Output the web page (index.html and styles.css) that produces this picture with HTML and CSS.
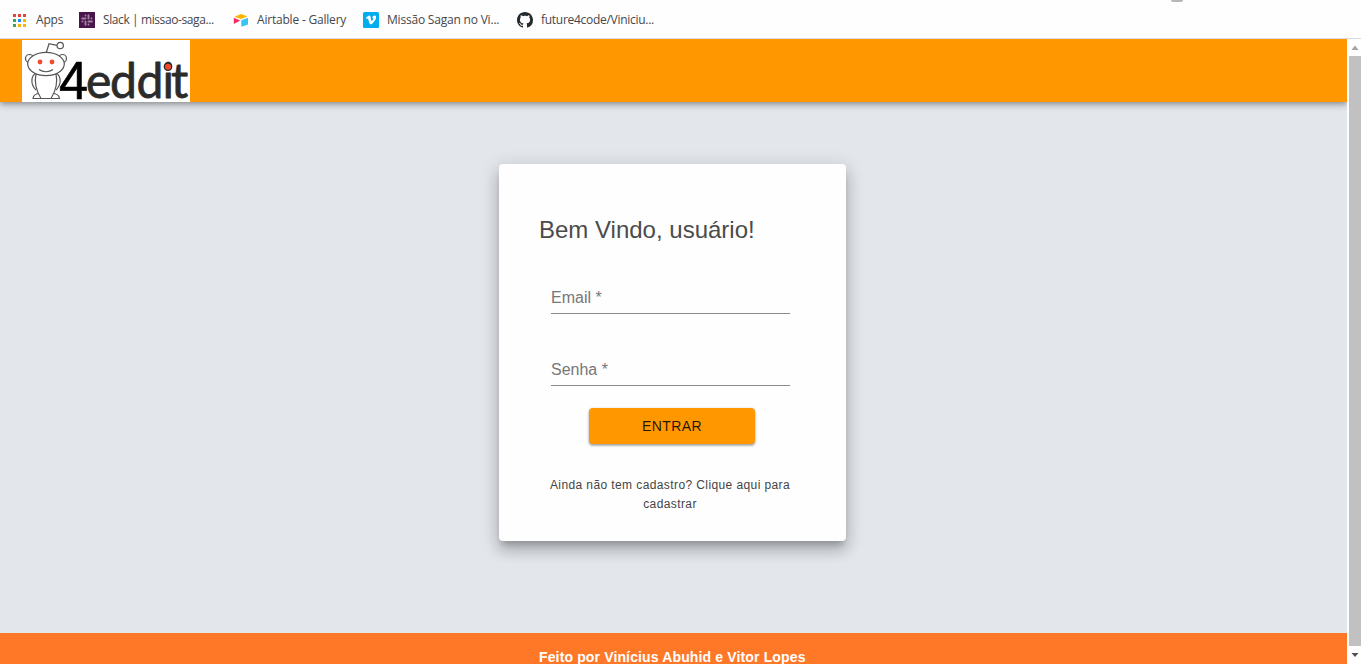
FILE: index.html
```html
<!DOCTYPE html>
<html lang="pt-BR">
<head>
<meta charset="utf-8">
<title>4eddit</title>
<link rel="stylesheet" href="styles.css">
</head>
<body>
<div class="window">
  <nav class="bookmarks">
    <span class="tab-handle"></span>
    <a class="bookmark apps">
      <svg width="13" height="13" viewBox="0 0 13 13"><g fill="#ea4335"><path d="M0 0h3v3H0zM5 0h3v3H5zM10 0h3v3h-3z"/></g><path fill="#34a853" d="M0 5h3v3H0zM0 10h3v3H0z"/><path fill="#1a8cf0" d="M5 5h3v3H5z"/><path fill="#fbb30a" d="M10 5h3v3h-3zM5 10h3v3H5zM10 10h3v3h-3z"/></svg>
      <span class="label">Apps</span>
    </a>
    <a class="bookmark slack">
      <svg width="16" height="16" viewBox="0 0 16 16"><path fill="#4a154b" d="M0 0h16v16H0z"/><g stroke="#a084a2" stroke-width="1.900" stroke-linecap="round"><path d="M9.500 3.200v3.300M3.200 6.500h3.300M6.500 9.500v3.300M9.500 9.500h3.300M6.500 3.500v.1M12.500 6.500v.1M9.500 12.500v.1M3.500 9.500v.1"/></g></svg>
      <span class="label">Slack | missao-saga...</span>
    </a>
    <a class="bookmark airtable">
      <svg width="16" height="16" viewBox="0 0 16 16"><path fill="#fcb400" d="M1.500 4.700 7.300 2.200q.8-.3 1.600 0l5.600 2.300-5.700 2.300q-.8.3-1.600 0z"/><path fill="#38c4f5" d="M8.300 8.200 15 5.800v6.600l-6.700 2.300z"/><path fill="#f82b60" d="M.8 5.700 7.200 8.500.8 12z"/></svg>
      <span class="label">Airtable - Gallery</span>
    </a>
    <a class="bookmark vimeo">
      <svg width="16" height="16" viewBox="0 0 16 16"><rect width="16" height="16" rx="1.500" fill="#00adef"/><path fill="#fff" d="M3 5.800C4.200 4.700 5.400 3.600 6.200 3.600c1 0 1.300.9 1.500 2.100.3 1.600.5 3.400 1 3.400.4 0 1.500-1.700 1.500-2.500 0-.8-.6-.9-1.200-.6.5-1.700 1.500-2.600 2.700-2.500 1 .1 1.500.8 1.400 1.900-.2 2.300-3.600 6.900-5.400 6.900-1.200 0-1.500-1.400-1.900-3-.4-1.300-.6-2.700-1-2.700-.3 0-.8.3-1.200.6z"/></svg>
      <span class="label">Missão Sagan no Vi...</span>
    </a>
    <a class="bookmark github">
      <svg width="16" height="16" viewBox="0 0 16 16"><path fill="#24292e" d="M8 0C3.580 0 0 3.580 0 8c0 3.540 2.290 6.530 5.470 7.590.4.070.550-.170.550-.380 0-.190-.010-.820-.010-1.490-2.010.370-2.530-.490-2.690-.940-.090-.230-.480-.940-.820-1.130-.280-.150-.680-.520-.010-.530.630-.010 1.080.580 1.230.820.720 1.210 1.870.870 2.330.660.070-.520.280-.870.510-1.070-1.780-.200-3.640-.890-3.640-3.950 0-.870.310-1.590.820-2.150-.080-.200-.360-1.020.080-2.120 0 0 .670-.210 2.200.820.640-.180 1.320-.270 2-.270s1.360.090 2 .270c1.530-1.040 2.200-.820 2.200-.820.440 1.100.160 1.920.080 2.120.510.560.820 1.270.820 2.150 0 3.070-1.870 3.750-3.650 3.950.290.250.540.730.540 1.480 0 1.070-.010 1.930-.010 2.200 0 .210.150.460.550.380A8.010 8.010 0 0 0 16 8c0-4.420-3.580-8-8-8z"/></svg>
      <span class="label">future4code/Viniciu...</span>
    </a>
  </nav>
  <div class="viewport">
    <div class="page">
      <header class="header">
        <svg class="logo" width="168" height="62" viewBox="0 0 168 62">
          <path fill="#fff" d="M0 0h168v62H0z"/>
          <g fill="#fff" stroke="#555" stroke-width="1.200">
            <path fill="none" d="M24.300 12.500 27 3.700l8 1.600"/>
            <circle cx="38.200" cy="5.500" r="3.200"/>
            <circle cx="7.500" cy="18.500" r="4"/>
            <circle cx="40.500" cy="18.500" r="4"/>
            <path d="M14 33c-5 3-6 11 0 17M34 33c5 3 6 11 0 17"/>
            <path d="M11 58.500c.5-4 3-5 7-5h12c4 0 7 1 7.500 5z"/>
            <path d="M14 34h20c2 9-1 18-5 24.500H19C15 52 12 43 14 34z"/>
            <ellipse cx="24" cy="24" rx="18.300" ry="11.700"/>
            <path fill="none" d="M17 29.500c4 3 10 3 14 0"/>
          </g>
          <circle cx="18" cy="22" r="2.400" fill="#f04b2b"/><circle cx="30" cy="22" r="2.400" fill="#f04b2b"/>
          <text class="logo-four" x="37" y="58.500" textLength="29" lengthAdjust="spacingAndGlyphs">4</text>
          <text class="logo-word" x="64 88 114.500 140.500 149" y="58">eddit</text>
          <circle cx="146" cy="26.700" r="3.700" fill="#f04b2b" stroke="#2b2b2b" stroke-width="1.300"/>
        </svg>
      </header>
      <main class="main">
        <form class="card">
          <h1 class="title">Bem Vindo, usuário!</h1>
          <div class="field">Email *</div>
          <div class="field">Senha *</div>
          <button class="submit" type="button">ENTRAR</button>
          <p class="signup">Ainda não tem cadastro? Clique aqui para cadastrar</p>
        </form>
      </main>
      <footer class="footer">Feito por Vinícius Abuhid e Vitor Lopes</footer>
    </div>
    <div class="scrollbar">
      <svg class="arrow" width="12" height="17" viewBox="0 0 12 17"><path fill="#a3a3a3" d="M2.500 11 6 6.500 9.500 11z"/></svg>
      <div class="thumb"></div>
      <svg class="arrow" width="12" height="18" viewBox="0 0 12 18"><path fill="#505050" d="M2.500 7h7L6 11z"/></svg>
    </div>
  </div>
</div>
</body>
</html>
```
FILE: styles.css
```css
* { box-sizing: border-box; }
body { margin: 0; overflow: hidden; background: #fff; font-family: "Liberation Sans", Arial, sans-serif; }
.window { height: 664px; display: flex; flex-direction: column; }
.bookmarks { position: relative; flex: none; height: 39px; display: flex; align-items: center; border-bottom: 1px solid #d9dae2; padding: 2px 0 0 13px; background: #fefefe; }
.tab-handle { position: absolute; left: 1171px; top: 0; width: 12px; height: 2px; background: #b4b6ba; border-radius: 0 0 3px 3px; }
.bookmark { display: flex; align-items: center; gap: 8px; height: 16px; flex: none; }
.bookmark svg { flex: none; display: block; }
.label { font: 12px/16px "Open Sans", "Noto Sans", sans-serif; color: #45474b; white-space: nowrap; letter-spacing: -.2px; }
.apps { width: 66px; gap: 10px; }
.slack { width: 154px; }
.airtable { width: 130px; }
.vimeo { width: 154px; }
.slack .label { letter-spacing: -.4px; }
.github .label { letter-spacing: -.28px; }
.viewport { flex: 1; min-height: 0; display: flex; }
.page { width: 1347px; overflow: hidden; display: flex; flex-direction: column; background: #e3e6eb; }
.header { position: relative; height: 63px; flex: none; padding: 1px 0 0 22px; background: #ff9800; box-shadow: 0 2px 4px -1px rgba(0,0,0,.2), 0 4px 5px rgba(0,0,0,.14), 0 1px 10px rgba(0,0,0,.12); }
.logo { display: block; overflow: visible; }
.logo-four { font: 53px "Liberation Sans", sans-serif; fill: #000; stroke: #000; stroke-width: .6px; stroke-linejoin: round; }
.logo-word { font: 48px Lato, sans-serif; fill: #2b2b2b; stroke: #2b2b2b; stroke-width: .8px; stroke-linejoin: round; }
.main { height: 531px; flex: none; padding: 62px 0 0 499px; }
.card { width: 347px; height: 377px; padding: 51px 56px 0 40px; background: #fefefe; border-radius: 4px; display: flex; flex-direction: column; box-shadow: 0 6px 6px -3px rgba(0,0,0,.2), 0 10px 14px 1px rgba(0,0,0,.14), 0 4px 18px 3px rgba(0,0,0,.12); }
.title { margin: 0 0 38px; font-size: 24px; font-weight: 400; line-height: 30px; color: #4b4b4b; white-space: nowrap; }
.field { height: 31px; width: 239px; margin: 0 0 41px 12px; padding-top: 5px; flex: none; border-bottom: 1px solid #8b8b8b; font-size: 16px; line-height: 20px; color: #777; }
.submit { width: 166px; height: 36px; margin: -19px 0 31px 50px; flex: none; padding: 0; border: 0; border-radius: 4px; background: #ff9800; color: rgba(0,0,0,.87); font: 14px/36px "Liberation Sans", sans-serif; letter-spacing: .4px; box-shadow: 0 1px 3px rgba(0,0,0,.3), 0 2px 2px rgba(0,0,0,.16); }
.signup { margin: 1px 0 0 9px; width: 244px; font-size: 12px; line-height: 19px; letter-spacing: .4px; text-align: center; color: #454545; }
.footer { flex: 1; padding: 16px 0 0 539px; background: #ff7828; color: #fff; font-size: 14px; font-weight: 700; line-height: 16px; letter-spacing: .14px; white-space: nowrap; }
.scrollbar { width: 14px; padding-left: 2px; display: flex; flex-direction: column; background: #fefefe; }
.arrow { display: block; flex: none; }
.thumb { flex: 1; background: #c1c1c1; }
```
